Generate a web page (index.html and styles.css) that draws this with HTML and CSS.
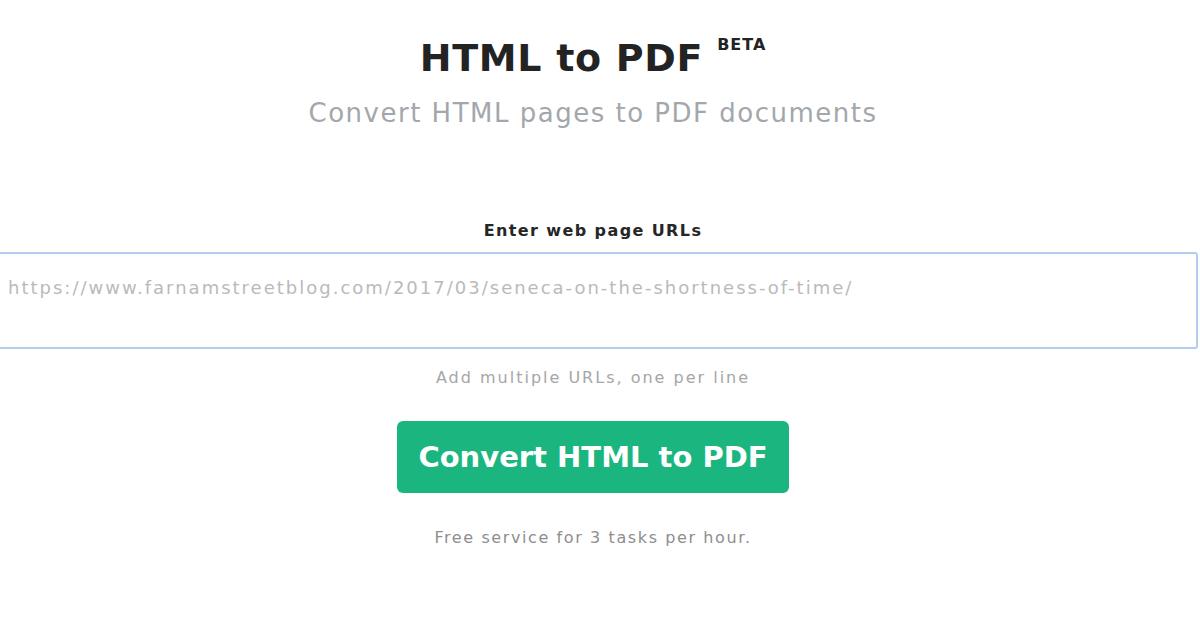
FILE: index.html
```html
<!DOCTYPE html>
<html lang="en">
<head>
  <meta charset="UTF-8">
  <title>HTML to PDF</title>
  <link rel="stylesheet" href="styles.css">
</head>
<body>
  <div class="page">
    <header class="hero">
      <h1 class="title">HTML to PDF <sup class="beta">BETA</sup></h1>
      <p class="subtitle">Convert HTML pages to PDF documents</p>
    </header>

    <form class="convert-form">
      <label class="field-label" for="urls">Enter web page URLs</label>
      <textarea id="urls" class="url-input" placeholder="https://www.farnamstreetblog.com/2017/03/seneca-on-the-shortness-of-time/"></textarea>
      <p class="hint">Add multiple URLs, one per line</p>
      <button type="button" class="convert-btn">Convert HTML to PDF</button>
      <p class="note">Free service for 3 tasks per hour.</p>
    </form>
  </div>
</body>
</html>
```

FILE: styles.css
```css
body {
  margin: 0;
  padding: 0;
  background-color: #ffffff;
  font-family: "DejaVu Sans", "Open Sans", sans-serif;
  overflow: hidden;
}

.page {
  display: flex;
  flex-direction: column;
  align-items: center;
  text-align: center;
  padding-right: 14px;
}

.hero {
  padding-top: 32px;
}

.title {
  margin: 0;
  font-size: 38px;
  line-height: 52px;
  font-weight: 700;
  letter-spacing: 0.7px;
  color: #232323;
}

.beta {
  font-size: 16px;
  letter-spacing: 1px;
  vertical-align: top;
  position: relative;
  top: -13px;
  margin-left: 0;
}

.subtitle {
  margin: 9px 0 0;
  font-size: 26px;
  line-height: 40px;
  letter-spacing: 1.5px;
  color: #a3a7ab;
}

.convert-form {
  width: 100%;
  display: flex;
  flex-direction: column;
  align-items: center;
  margin-top: 87px;
}

.field-label {
  font-size: 16px;
  font-weight: 700;
  letter-spacing: 1.4px;
  color: #262626;
  line-height: 22px;
  margin-bottom: 10px;
}

.url-input {
  align-self: flex-start;
  box-sizing: border-box;
  width: calc(100% + 16px);
  margin-left: -4px;
  height: 97px;
  padding: 23px 10px;
  border: 2px solid #b2cdee;
  border-radius: 3px;
  font-family: inherit;
  font-size: 18px;
  letter-spacing: 2px;
  color: #333;
  resize: none;
  outline: none;
}

.url-input::placeholder {
  color: #bababa;
}

.hint {
  margin: 17px 0 0;
  font-size: 16px;
  line-height: 24px;
  letter-spacing: 2px;
  color: #a6a6a6;
}

.convert-btn {
  margin-top: 31px;
  width: 392px;
  height: 72px;
  border: none;
  border-radius: 6px;
  background-color: #1bb67f;
  color: #ffffff;
  font-family: inherit;
  font-size: 29px;
  font-weight: 700;
  cursor: pointer;
}

.note {
  margin: 33px 0 0;
  font-size: 16px;
  line-height: 24px;
  letter-spacing: 1.6px;
  color: #8e8e8e;
}
```
